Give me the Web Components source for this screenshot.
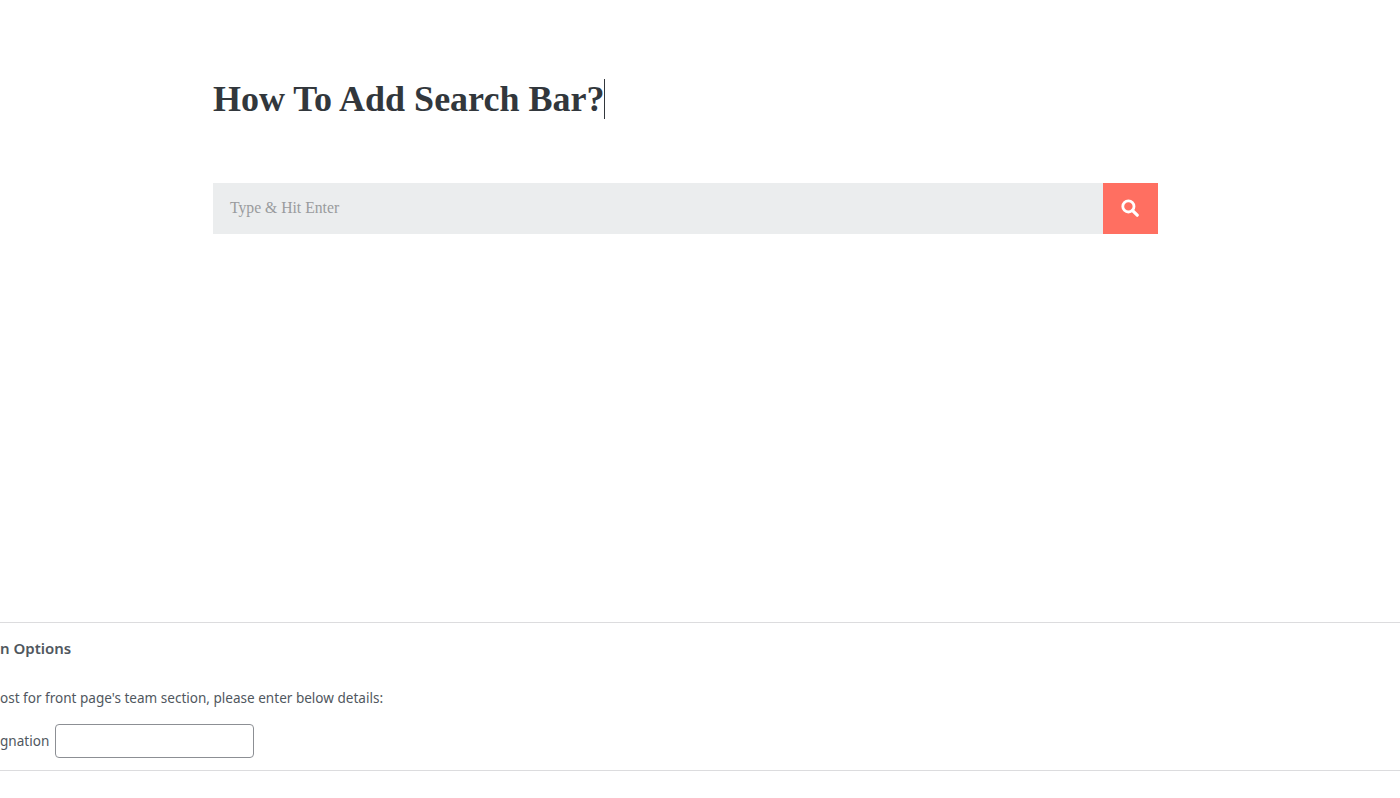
<!DOCTYPE html>
<html>
<head>
<meta charset="utf-8">
<title>How To Add Search Bar?</title>
<style>
    html, body {
        margin: 0;
        height: 798px;
        overflow: hidden;
        background: #fff;
    }
    body {
        display: flex;
        flex-direction: column;
    }
</style>
</head>
<body>
<post-editor>
    <post-title>How To Add Search Bar?</post-title>
    <search-box placeholder="Type &amp; Hit Enter"></search-box>
</post-editor>
<meta-box heading="n Options" note="ost for front page's team section, please enter below details:" label="gnation"></meta-box>

<script>
// <post-editor> white area holding the title and the search block
class postEditor extends HTMLElement {
    constructor() {
        super();
        this.attachShadow({ mode: 'open' });
        this.shadowRoot.innerHTML = `
            <style>
                :host {
                    display: block;
                    height: 622px;
                    box-sizing: border-box;
                    padding: 78px 242px 0 213px;
                }
            </style>
            <slot></slot>
        `;
    }
}

// <post-title> big serif heading with the text caret after it
class postTitle extends HTMLElement {
    constructor() {
        super();
        this.attachShadow({ mode: 'open' });
        this.shadowRoot.innerHTML = `
            <style>
                :host {
                    display: flex;
                    align-items: center;
                    height: 41px;
                    margin-bottom: 64px;
                    font: bold 36px/41px "Liberation Serif", serif;
                    color: #32373c;
                }
                .text {
                    padding-top: 2px;
                }
                .caret {
                    width: 1px;
                    height: 40px;
                    background: #32373c;
                }
            </style>
            <span class="text"><slot></slot></span>
            <span class="caret"></span>
        `;
    }
}

// <search-box> grey input with the coral search button
class searchBox extends HTMLElement {
    constructor() {
        super();
        this.attachShadow({ mode: 'open' });
        this.shadowRoot.innerHTML = `
            <style>
                :host {
                    display: flex;
                    height: 51px;
                }
                .field {
                    flex: 1;
                    display: flex;
                    align-items: center;
                    padding: 0 0 2px 17px;
                    background: #ebedee;
                    color: #999b9d;
                    font: 15.7px "Liberation Serif", serif;
                }
                .button {
                    width: 55px;
                    display: flex;
                    align-items: center;
                    justify-content: center;
                    padding-right: 1px;
                    padding-bottom: 2px;
                    box-sizing: border-box;
                    background: #ff6f61;
                }
            </style>
            <div class="field"></div>
            <div class="button">
                <svg width="18" height="18" viewBox="0 0 18 18" fill="none" stroke="#fff">
                    <circle cx="7.4" cy="7.4" r="5.6" stroke-width="2.8"/>
                    <path d="M11.6 11.6L16.2 16.2" stroke-width="3.2" stroke-linecap="round"/>
                </svg>
            </div>
        `;
        this.shadowRoot.querySelector('.field').textContent = this.getAttribute('placeholder');
    }
}

// <meta-box> settings panel cut off by the left edge of the window
class metaBox extends HTMLElement {
    constructor() {
        super();
        this.attachShadow({ mode: 'open' });
        this.shadowRoot.innerHTML = `
            <style>
                :host {
                    display: block;
                    height: 149px;
                    box-sizing: border-box;
                    border-top: 1px solid #dcdcde;
                    border-bottom: 1px solid #dcdcde;
                    overflow: hidden;
                    font: 13.55px "Noto Sans", sans-serif;
                    color: #50575e;
                }
                h2 {
                    margin: 0;
                    padding-top: 15px;
                    height: 36px;
                    font: 600 15px/20px "Noto Sans", sans-serif;
                    color: #50575e;
                }
                p {
                    margin: 0;
                    padding-top: 14px;
                    height: 36px;
                    line-height: 20px;
                }
                .row {
                    display: flex;
                    align-items: center;
                    gap: 6px;
                }
                .input {
                    width: 197px;
                    height: 32px;
                    border: 1px solid #8c8f94;
                    border-radius: 4px;
                    background: #fff;
                }
            </style>
            <h2></h2>
            <p></p>
            <div class="row"><span class="label"></span><div class="input"></div></div>
        `;
        this.shadowRoot.querySelector('h2').textContent = this.getAttribute('heading');
        this.shadowRoot.querySelector('p').textContent = this.getAttribute('note');
        this.shadowRoot.querySelector('.label').textContent = this.getAttribute('label');
    }
}

customElements.define('post-editor', postEditor);
customElements.define('post-title', postTitle);
customElements.define('search-box', searchBox);
customElements.define('meta-box', metaBox);
</script>
</body>
</html>
